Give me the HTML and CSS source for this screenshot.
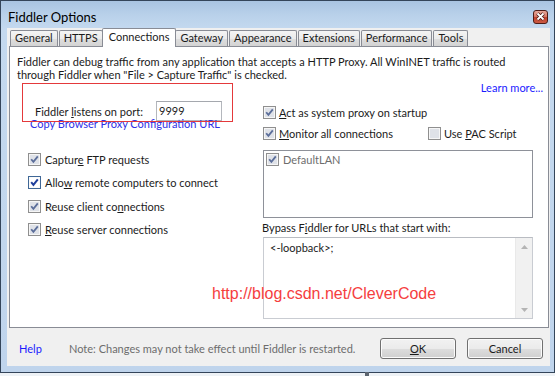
FILE: index.html
```html
<!DOCTYPE html>
<html lang="en">
<head>
<meta charset="utf-8">
<title>Fiddler Options</title>
<link rel="stylesheet" href="styles.css">
</head>
<body>
<div class="window">
  <div class="titlebar">
    <span class="title">Fiddler Options</span>
    <span class="close" aria-label="Close">
      <svg width="13" height="12" viewBox="0 0 13 12"><path d="M3.5 2.5 9.5 8.5M9.5 2.5 3.5 8.5" class="x-out"/><path d="M3.5 2.5 9.5 8.5M9.5 2.5 3.5 8.5" class="x-in"/></svg>
    </span>
  </div>
  <div class="client">
    <div class="tabs">
      <span class="tab">General</span>
      <span class="tab">HTTPS</span>
      <span class="tab active">Connections</span>
      <span class="tab">Gateway</span>
      <span class="tab">Appearance</span>
      <span class="tab">Extensions</span>
      <span class="tab">Performance</span>
      <span class="tab">Tools</span>
    </div>
    <div class="panel">
      <p class="desc">Fiddler can debug traffic from any application that accepts a HTTP Proxy. All WinINET traffic is routed<br>through Fiddler when "File &gt; Capture Traffic" is checked.</p>
      <div class="learn"><span class="link">Learn more...</span></div>
      <div class="cols">
        <div class="col-left">
          <div class="port-row">
            <span class="port-label">Fiddler <u>l</u>istens on port:</span>
            <span class="textbox port-input">9999</span>
          </div>
          <span class="copy">Copy Browser Proxy Configuration URL</span>
          <div class="checks">
            <div class="check"><svg class="cbx" viewBox="0 0 13 13"><rect class="cb-o" x=".5" y=".5" width="12" height="12"/><rect class="cb-i" x="2" y="2" width="9" height="9"/><path class="cb-k" d="M3.2 6.2 5.4 8.9 9.8 3.4"/></svg><span>Captur<u>e</u> FTP requests</span></div>
            <div class="check"><svg class="cbx hot" viewBox="0 0 13 13"><rect class="cb-o" x=".5" y=".5" width="12" height="12"/><rect class="cb-i" x="2" y="2" width="9" height="9"/><path class="cb-k" d="M3.2 6.2 5.4 8.9 9.8 3.4"/></svg><span>Allo<u>w</u> remote computers to connect</span></div>
            <div class="check"><svg class="cbx" viewBox="0 0 13 13"><rect class="cb-o" x=".5" y=".5" width="12" height="12"/><rect class="cb-i" x="2" y="2" width="9" height="9"/><path class="cb-k" d="M3.2 6.2 5.4 8.9 9.8 3.4"/></svg><span>Reuse client co<u>n</u>nections</span></div>
            <div class="check"><svg class="cbx" viewBox="0 0 13 13"><rect class="cb-o" x=".5" y=".5" width="12" height="12"/><rect class="cb-i" x="2" y="2" width="9" height="9"/><path class="cb-k" d="M3.2 6.2 5.4 8.9 9.8 3.4"/></svg><span><u>R</u>euse server connections</span></div>
          </div>
        </div>
        <div class="col-right">
          <div class="check act"><svg class="cbx" viewBox="0 0 13 13"><rect class="cb-o" x=".5" y=".5" width="12" height="12"/><rect class="cb-i" x="2" y="2" width="9" height="9"/><path class="cb-k" d="M3.2 6.2 5.4 8.9 9.8 3.4"/></svg><span><u>A</u>ct as system proxy on startup</span></div>
          <div class="monitor-row">
            <div class="check"><svg class="cbx" viewBox="0 0 13 13"><rect class="cb-o" x=".5" y=".5" width="12" height="12"/><rect class="cb-i" x="2" y="2" width="9" height="9"/><path class="cb-k" d="M3.2 6.2 5.4 8.9 9.8 3.4"/></svg><span><u>M</u>onitor all connections</span></div>
            <div class="check"><svg class="cbx" viewBox="0 0 13 13"><rect class="cb-o" x=".5" y=".5" width="12" height="12"/><rect class="cb-i" x="2" y="2" width="9" height="9"/></svg><span>Use <u>P</u>AC Script</span></div>
          </div>
          <div class="listbox">
            <div class="check"><svg class="cbx" viewBox="0 0 13 13"><rect class="cb-o" x=".5" y=".5" width="12" height="12"/><rect class="cb-i" x="2" y="2" width="9" height="9"/><path class="cb-k" d="M3.2 6.2 5.4 8.9 9.8 3.4"/></svg><span class="dim">DefaultLAN</span></div>
          </div>
          <div class="bypass-label">Bypass F<u>i</u>ddler for URLs that start with:</div>
          <div class="textarea">
            <div class="ta-text">&lt;-loopback&gt;;</div>
            <div class="scrollbar">
              <span class="sb-btn"><svg width="7" height="4" viewBox="0 0 7 4"><path d="M0 4 3.5 0 7 4Z" class="arrow"/></svg></span>
              <span class="sb-btn"><svg width="7" height="4" viewBox="0 0 7 4"><path d="M0 0 3.5 4 7 0Z" class="arrow"/></svg></span>
            </div>
          </div>
        </div>
      </div>
      <div class="annot"></div>
      <div class="watermark">http://blog.csdn.net/CleverCode</div>
    </div>
    <div class="footer">
      <span class="help">Help</span>
      <span class="note">Note: Changes may not take effect until Fiddler is restarted.</span>
      <span class="btn ok"><u>O</u>K</span>
      <span class="btn cancel">Cancel</span>
    </div>
  </div>
</div>
<div class="behind"></div>
</body>
</html>
```
FILE: styles.css
```css
* { box-sizing: border-box; }
html, body { margin: 0; padding: 0; }
body {
  width: 555px;
  height: 376px;
  overflow: hidden;
  position: relative;
  background: #eef2f6;
  font-family: Lato, "Noto Sans", sans-serif;
  font-size: 11px;
  line-height: 13px;
  color: #1b1b1b;
}
u { text-decoration: underline; text-underline-offset: 1px; }

.window {
  width: 555px;
  height: 373px;
  border: 1px solid #34455a;
  background: linear-gradient(#a9c4e2 0px, #b9d1ea 14px, #c4d9ef 28px, #bfd4ec 100%);
  padding: 0 4px 6px 6px;
  display: flex;
  flex-direction: column;
}
.titlebar {
  flex: none;
  height: 27px;
  display: flex;
  align-items: flex-start;
  padding-left: 1px;
}
.title {
  margin-top: 8px;
  font-size: 13px;
  line-height: 16px;
  color: #000;
}
.close {
  margin: 9px 2px 0 auto;
  width: 15px;
  height: 14px;
  border: 1px solid #4d1d17;
  border-radius: 3px;
  background: linear-gradient(#e8a89a, #d27462 50%, #c0412c 51%, #cb5a44);
  display: flex;
  align-items: center;
  justify-content: center;
}
.x-out { stroke: #4a1a14; stroke-width: 3.4; fill: none; }
.x-in { stroke: #ffffff; stroke-width: 1.8; fill: none; }

.client {
  flex: 1;
  background: #f0f0f0;
  display: flex;
  flex-direction: column;
}
.tabs {
  flex: none;
  height: 18px;
  display: flex;
  align-items: flex-end;
  padding-left: 3px;
  position: relative;
  z-index: 2;
}
.tab {
  height: 16px;
  padding: 0 4px;
  margin-right: 1px;
  border: 1px solid #898c95;
  border-bottom: none;
  border-radius: 2px 2px 0 0;
  background: linear-gradient(#f4f4f4, #ebebeb 50%, #dedede 51%, #d3d3d3);
  line-height: 14px;
  color: #1b1b1b;
}
.tab.active {
  height: 19px;
  margin: 0 -1px -1px -2px;
  padding: 0 6px;
  background: #ffffff;
  line-height: 15px;
  position: relative;
}

.panel {
  flex: none;
  position: relative;
  margin-left: 2px;
  width: 540px;
  height: 282px;
  border: 1px solid #898c95;
  background: #ffffff;
  padding: 8px 5px 0 7px;
}
.desc { margin: 0; }
.learn { text-align: right; }
.link, .help { color: #1a1aff; }

.cols {
  display: grid;
  grid-template-columns: 245px 271px;
}
.port-row {
  display: grid;
  grid-template-columns: 121px 66px;
  align-items: center;
  height: 20px;
  margin: 7px 0 0 18px;
}
.textbox {
  height: 20px;
  border: 1px solid #b4b7bd;
  border-top-color: #a5a8ae;
  padding: 0 2px;
  line-height: 18px;
  background: #fff;
}
.copy {
  display: block;
  margin: -4px 0 0 13px;
  color: #2e2ee6;
}
.checks {
  display: flex;
  flex-direction: column;
  gap: 10.33px;
  margin: 23px 0 0 11px;
}
.check {
  display: flex;
  align-items: center;
  gap: 4px;
  height: 13px;
  white-space: nowrap;
}
.cbx { width: 13px; height: 13px; flex: none; }
.cb-o { fill: #f6f6f6; stroke: #8f8f8f; }
.cb-i { fill: #dfe2e8; }
.cb-k { fill: none; stroke: #5b6e9a; stroke-width: 1.8; }
.cbx.hot .cb-o { stroke: #3f6796; fill: #fafafa; }
.cbx.hot .cb-i { fill: #ffffff; }
.cbx.hot .cb-k { stroke: #1f3f9c; stroke-width: 2; }

.col-right { padding-left: 1px; }
.act { margin-top: 12px; gap: 3px; }
.monitor-row {
  display: grid;
  grid-template-columns: 165px auto;
  margin-top: 8px;
}
.monitor-row .check { gap: 3px; }
.listbox {
  margin-top: 10px;
  width: 270px;
  height: 68px;
  border: 1px solid #8e9199;
  padding: 2px 0 0 2px;
}
.listbox .check { gap: 4px; }
.dim { color: #6d6d6d; }
.bypass-label { margin: 3px 0 0 -1px; }
.textarea {
  margin-top: 3px;
  width: 270px;
  height: 82px;
  border: 1px solid #c9ccd2;
  border-top-color: #b9bcc2;
  display: flex;
}
.ta-text { flex: 1; padding: 3px 6px; }
.scrollbar {
  width: 17px;
  background: #f1f1f1;
  border-left: 1px solid #e9e9e9;
  display: flex;
  flex-direction: column;
  justify-content: space-between;
}
.sb-btn {
  height: 17px;
  display: flex;
  align-items: center;
  justify-content: center;
}
.arrow { fill: #b4b4b4; }

.annot {
  position: absolute;
  left: 12px;
  top: 36px;
  width: 211px;
  height: 39px;
  border: 1px solid #e4393b;
}
.watermark {
  position: absolute;
  left: 202px;
  top: 238px;
  font-family: "Liberation Sans", Arial, sans-serif;
  font-size: 16px;
  line-height: 18px;
  color: #f53e3e;
  white-space: nowrap;
}

.footer {
  flex: 1;
  display: flex;
  align-items: center;
  padding: 10px 7px 7px 12px;
}
.help { width: 50px; }
.note { color: #6d6d6d; }
.btn {
  width: 76px;
  height: 21px;
  border: 1px solid #707070;
  border-radius: 3px;
  background: linear-gradient(#f2f2f2, #ebebeb 50%, #dddddd 51%, #cfcfcf);
  box-shadow: inset 0 0 0 1px #fbfbfb;
  text-align: center;
  line-height: 19px;
  color: #1b1b1b;
}
.ok { margin-left: auto; }
.cancel { margin-left: 11px; }

.behind {
  position: absolute;
  left: 365px;
  top: 372px;
  width: 4px;
  height: 4px;
  background: #5c6570;
}
```
